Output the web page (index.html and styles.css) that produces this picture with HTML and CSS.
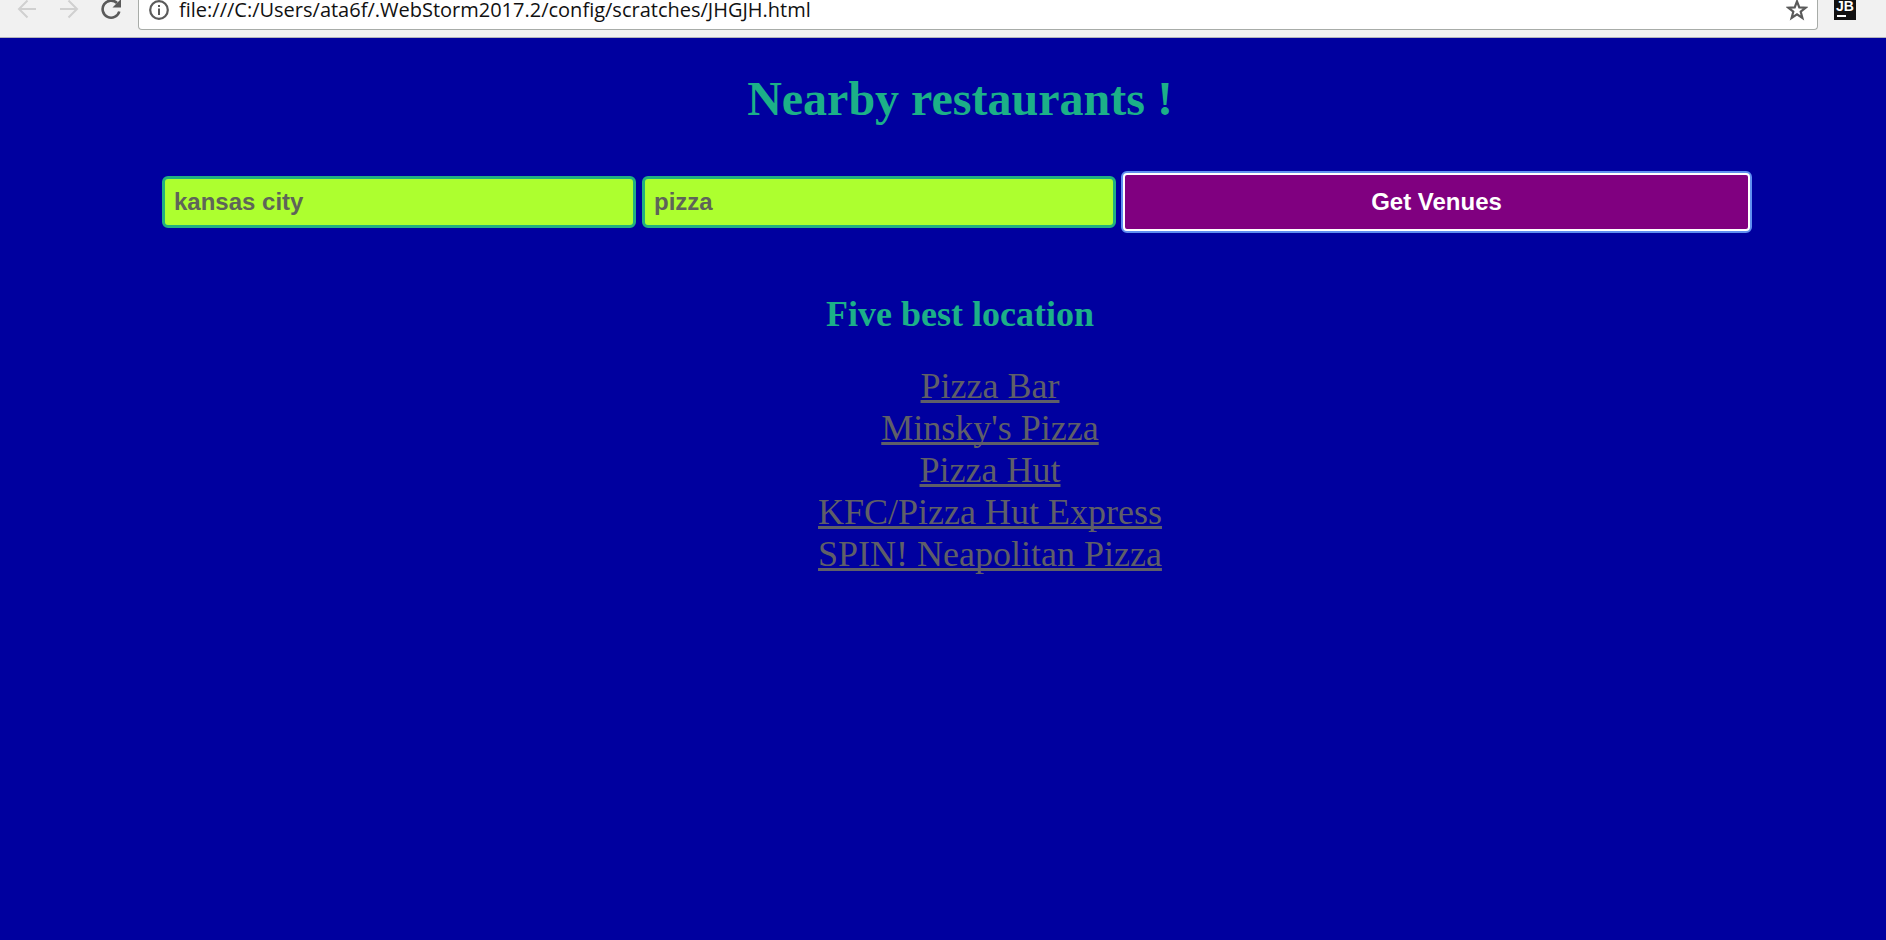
FILE: index.html
```html
<!DOCTYPE html>
<html lang="en">
<head>
<meta charset="utf-8">
<title>Nearby restaurants</title>
<link rel="stylesheet" href="styles.css">
</head>
<body>
<header class="toolbar">
  <nav class="nav-buttons">
    <button class="icon-button" aria-label="Back" disabled>
      <svg width="20" height="20" viewBox="0 0 20 20"><path d="M19 10H2M10.500 1.500 2 10l8.500 8.500" fill="none" stroke="#d0d0d0" stroke-width="2"/></svg>
    </button>
    <button class="icon-button" aria-label="Forward" disabled>
      <svg width="20" height="20" viewBox="0 0 20 20"><path d="M1 10h17M9.500 1.500 18 10l-8.500 8.500" fill="none" stroke="#d0d0d0" stroke-width="2"/></svg>
    </button>
    <button class="icon-button" aria-label="Reload">
      <svg width="20" height="20" viewBox="0 0 20 20"><path d="M18.300 12.500A8.500 8.500 0 1 1 16 4" fill="none" stroke="#5a5a5a" stroke-width="2.600"/><path d="M20 0v8.500h-8.500z" fill="#5a5a5a"/></svg>
    </button>
  </nav>
  <div class="omnibox">
    <svg width="20" height="20" viewBox="0 0 20 20"><circle cx="10" cy="10" r="8.800" fill="none" stroke="#5a5a5a" stroke-width="2.200"/><path d="M9 5h2v2H9zM9 8.600h2V15H9z" fill="#5a5a5a"/></svg>
    <input class="url" type="text" aria-label="Address" value="file:///C:/Users/ata6f/.WebStorm2017.2/config/scratches/JHGJH.html">
    <button class="icon-button" aria-label="Bookmark this page">
      <svg width="22" height="22" viewBox="0 0 22 22"><path d="m11 2.400 2.300 6 6.400.300-5 4 1.700 6.200-5.400-3.500-5.400 3.500 1.700-6.200-5-4 6.400-.300z" fill="none" stroke="#5a5a5a" stroke-width="2.200"/></svg>
    </button>
  </div>
  <button class="extension" aria-label="JetBrains extension">JB</button>
</header>
<main class="page">
  <h1 class="title">Nearby restaurants !</h1>
  <form class="search">
    <input class="field" type="text" aria-label="City" value="kansas city">
    <input class="field" type="text" aria-label="Food" value="pizza">
    <button class="submit" type="button">Get Venues</button>
  </form>
  <h2 class="subtitle">Five best location</h2>
  <ul class="venues">
    <li><a href="#">Pizza Bar</a></li>
    <li><a href="#">Minsky's Pizza</a></li>
    <li><a href="#">Pizza Hut</a></li>
    <li><a href="#">KFC/Pizza Hut Express</a></li>
    <li><a href="#">SPIN! Neapolitan Pizza</a></li>
  </ul>
</main>
</body>
</html>
```
FILE: styles.css
```css
* {
  box-sizing: border-box;
}

body {
  margin: 0;
  background: #00009f;
  font-family: "Liberation Serif", "Times New Roman", serif;
}

.toolbar {
  display: flex;
  align-items: flex-start;
  height: 38px;
  padding: 0 30px 0 17px;
  background: #f1f1f1;
  border-bottom: 1px solid #b4b4bc;
}

.nav-buttons {
  display: flex;
  gap: 22px;
  width: 121px;
  margin-top: -1px;
}

.icon-button {
  display: flex;
  padding: 0;
  border: 0;
  background: none;
}

.omnibox {
  display: flex;
  flex: 1;
  align-items: center;
  gap: 10px;
  height: 30px;
  padding: 0 9px 10px 10px;
  background: #fff;
  border: 1px solid #a8aca8;
  border-top: 0;
  border-radius: 0 0 4px 4px;
}

.url {
  flex: 1;
  height: 30px;
  padding: 0;
  border: 0;
  outline: 0;
  background: none;
  color: #111;
  font: 20px "Open Sans", "Noto Sans", sans-serif;
}

.extension {
  width: 22px;
  height: 20px;
  margin-left: 16px;
  padding: 0 0 8px;
  border: 0;
  background:
    linear-gradient(#fff, #fff) 3px 15px / 9px 2px no-repeat,
    #111;
  color: #fff;
  font: bold 14px/12px "Liberation Sans", Arial, sans-serif;
}

.page {
  padding: 33px 0 32px 34px;
  text-align: center;
}

.title {
  margin: 0;
  color: #1cb088;
  font-size: 48px;
  line-height: 56px;
}

.search {
  display: grid;
  grid-template-columns: 474fr 474fr 629fr;
  align-items: center;
  gap: 6px;
  margin: 45px 135px 0 128px;
}

.field,
.submit {
  min-width: 0;
  font: bold 24px/28px "Liberation Sans", Arial, sans-serif;
}

.field {
  height: 52px;
  padding: 0 9px;
  border: 3px solid #20b080;
  border-radius: 6px;
  background: #adff2f;
  color: #5e6459;
}

.submit {
  height: 60px;
  border: 3px solid #fff;
  border-radius: 5px;
  outline: 2px solid #5f8ff0;
  outline-offset: -1px;
  background: #800080;
  color: #fff;
}

.subtitle {
  margin: 61px 0 0;
  color: #1cb088;
  font-size: 36px;
  line-height: 42px;
}

.venues {
  margin: 30px 0 0;
  padding: 0 0 0 60px;
  list-style: none;
  font-size: 36px;
  line-height: 42px;
}

.venues a {
  color: #5f5f68;
  text-decoration-thickness: 3px;
  text-decoration-skip-ink: none;
}
```
